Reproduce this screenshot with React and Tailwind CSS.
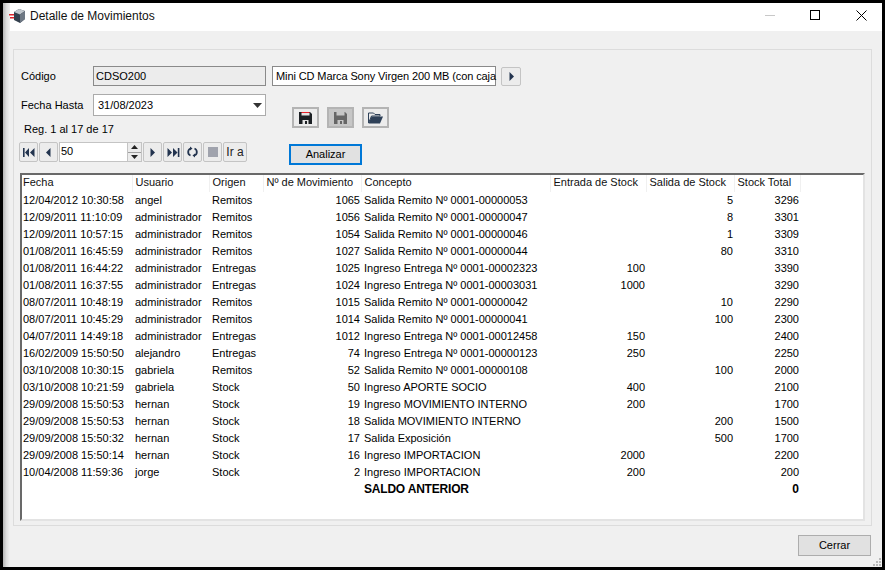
import React from "react";

const rows = [
  ["12/04/2012 10:30:58","angel","Remitos","1065","Salida Remito Nº 0001-00000053","","5","3296"],
  ["12/09/2011 11:10:09","administrador","Remitos","1056","Salida Remito Nº 0001-00000047","","8","3301"],
  ["12/09/2011 10:57:15","administrador","Remitos","1054","Salida Remito Nº 0001-00000046","","1","3309"],
  ["01/08/2011 16:45:59","administrador","Remitos","1027","Salida Remito Nº 0001-00000044","","80","3310"],
  ["01/08/2011 16:44:22","administrador","Entregas","1025","Ingreso Entrega Nº 0001-00002323","100","","3390"],
  ["01/08/2011 16:37:55","administrador","Entregas","1024","Ingreso Entrega Nº 0001-00003031","1000","","3290"],
  ["08/07/2011 10:48:19","administrador","Remitos","1015","Salida Remito Nº 0001-00000042","","10","2290"],
  ["08/07/2011 10:45:29","administrador","Remitos","1014","Salida Remito Nº 0001-00000041","","100","2300"],
  ["04/07/2011 14:49:18","administrador","Entregas","1012","Ingreso Entrega Nº 0001-00012458","150","","2400"],
  ["16/02/2009 15:50:50","alejandro","Entregas","74","Ingreso Entrega Nº 0001-00000123","250","","2250"],
  ["03/10/2008 10:30:15","gabriela","Remitos","52","Salida Remito Nº 0001-00000108","","100","2000"],
  ["03/10/2008 10:21:59","gabriela","Stock","50","Ingreso APORTE SOCIO","400","","2100"],
  ["29/09/2008 15:50:53","hernan","Stock","19","Ingreso MOVIMIENTO INTERNO","200","","1700"],
  ["29/09/2008 15:50:53","hernan","Stock","18","Salida MOVIMIENTO INTERNO","","200","1500"],
  ["29/09/2008 15:50:32","hernan","Stock","17","Salida Exposición","","500","1700"],
  ["29/09/2008 15:50:14","hernan","Stock","16","Ingreso IMPORTACION","2000","","2200"],
  ["10/04/2008 11:59:36","jorge","Stock","2","Ingreso IMPORTACION","200","","200"],
];

const headers = ["Fecha","Usuario","Origen","Nº de Movimiento","Concepto","Entrada de Stock","Salida de Stock","Stock Total"];
const widths = [110,77,54,98,189,96,88,66];
const rightAligned = [false,false,false,true,false,true,true,true];

function NavBtn({ children, w = "w-[19px]" }) {
  return (
    <button className={`${w} h-[20px] flex items-center justify-center bg-[#ececec] border border-[#c4c4c4] rounded-[2px] p-0`}>
      {children}
    </button>
  );
}

const navColor = "#23344f";

function Tri({ dir }) {
  return (
    <svg width="11" height="11" viewBox="0 0 11 11">
      {dir === "left" ? <path d="M7.5 1v9L3 5.500z" fill={navColor} /> : <path d="M3.5 1v9L8 5.500z" fill={navColor} />}
    </svg>
  );
}

function Save({ color = "#1c2024", red = "#e8202a", light = "#e4e4e4" }) {
  return (
    <svg width="13" height="12" viewBox="0 0 13 12">
      <path d="M0 0h11l2 2v10H0z" fill={color} />
      <rect x="2.500" y="0" width="8" height="1" fill={red} />
      <rect x="2.500" y="1" width="8" height="2.500" fill={light} />
      <rect x="3.500" y="8" width="6" height="4" fill={light} />
      <rect x="6" y="9" width="2" height="3" fill={color} />
    </svg>
  );
}

function IconBtn({ children, bg = "bg-[#ececec]" }) {
  return (
    <button className={`w-[27px] h-[21px] flex items-center justify-center ${bg} border-2 border-[#b4b4b4] p-0`}>
      {children}
    </button>
  );
}

export default function App() {
  return (
    <div className="relative w-[885px] h-[570px] bg-black pt-[3px] pr-[3px] pb-[3px] pl-[3px] flex text-black text-[11px] leading-[17px] overflow-hidden" style={{ fontFamily: '"Liberation Sans", Arial, sans-serif' }}>
      <div className="w-[7px] shrink-0 bg-gradient-to-r from-[#b4b4b4] via-[#dcdcdc] to-[#f0f0f0]" />
      <div className="flex-1 flex flex-col min-w-0 bg-[#f0f0f0]">
        {/* title bar */}
        <div className="h-[28px] bg-white flex items-center relative shrink-0 pb-[2px]">
          <svg className="absolute left-[-1px] top-[5px]" width="17" height="16" viewBox="0 0 17 16">
            <rect x="0" y="6" width="6" height="1.5" fill="#e0242c" />
            <rect x="1" y="9" width="5" height="1.5" fill="#e0242c" />
            <path d="M5 4l5-3 6 2v8l-5 4-6-3z" fill="#34404e" />
            <path d="M5 4l6 2.500 5-3.500-6-2z" fill="#c2c8ce" />
            <path d="M11 6.500V15l5-4V3z" fill="#6e7884" />
          </svg>
          <span className="ml-[20px] text-[#111] text-[12px]">Detalle de Movimientos</span>
          <div className="ml-auto relative w-[120px] h-[28px] self-start">
            <span className="absolute left-[3px] top-[12px] w-[10px] h-px bg-[#c8c8c8]" />
            <span className="absolute left-[48px] top-[7px] w-[10px] h-[10px] border border-black" />
            <svg className="absolute left-[94px] top-[7px]" width="11" height="11" viewBox="0 0 11 11">
              <path d="M0.500 0.500l10 10M10.500 0.500l-10 10" stroke="#000" strokeWidth="1" fill="none" />
            </svg>
          </div>
        </div>

        {/* body */}
        <div className="flex-1 flex flex-col pt-[18px] pl-[3px] pr-[10px] min-h-0">
          <div className="h-[477px] border border-[#dcdcdc] pt-[16px] px-[6px] pb-[4px] flex flex-col shrink-0">
            {/* row 1 */}
            <div className="flex items-start h-[20px]">
              <label className="w-[73px] pl-[1px] leading-[20px]">Código</label>
              <div className="w-[173px] h-[20px] border border-[#8a8a8a] bg-[#ececec] pl-[2px] leading-[18px]">CDSO200</div>
              <div className="ml-[6px] w-[224px] h-[20px] border border-[#8a8a8a] bg-white pl-[3px] leading-[18px] whitespace-nowrap tracking-[-0.1px]">Mini CD Marca Sony Virgen 200 MB (con caja</div>
              <button className="ml-[5px] mt-[1px] w-[20px] h-[19px] flex items-center justify-center bg-[#ececec] border border-[#c4c4c4] rounded-[2px] p-0">
                <Tri dir="right" />
              </button>
            </div>

            <div className="flex mt-[8px] h-[71px]">
              {/* left col */}
              <div className="w-[269px] flex flex-col shrink-0">
                <div className="flex items-start h-[22px]">
                  <label className="w-[73px] pl-[1px] leading-[22px]">Fecha Hasta</label>
                  <div className="w-[173px] h-[22px] border border-[#ababab] bg-white pl-[4px] leading-[20px] flex items-center justify-between">
                    <span>31/08/2023</span>
                    <svg className="mr-[3px]" width="9" height="5" viewBox="0 0 9 5"><path d="M0 0h9L4.500 5z" fill="#333" /></svg>
                  </div>
                </div>
                <div className="pl-[4px] mt-[6px] h-[14px] leading-[14px]">Reg. 1 al 17 de 17</div>
                <div className="flex items-center gap-px mt-[6px] -ml-[1px] h-[20px]">
                  <NavBtn>
                    <svg width="14" height="11" viewBox="0 0 14 11"><path d="M1 1h1.600v9H1zM7 1v9L3 5.500zM12.500 1v9L8 5.500z" fill={navColor} /></svg>
                  </NavBtn>
                  <NavBtn><Tri dir="left" /></NavBtn>
                  <div className="w-[83px] h-[20px] bg-white border border-[#c4c4c4] flex justify-between">
                    <span className="pl-[1px] leading-[16px]">50</span>
                    <div className="w-[14px] flex flex-col border-l border-[#c4c4c4] bg-[#ececec]">
                      <div className="flex-1 flex items-center justify-center border-b border-[#a0a0a0]"><svg width="7" height="4" viewBox="0 0 7 4"><path d="M3.500 0L7 4H0z" fill="#222" /></svg></div>
                      <div className="flex-1 flex items-center justify-center"><svg width="7" height="4" viewBox="0 0 7 4"><path d="M0 0h7L3.500 4z" fill="#222" /></svg></div>
                    </div>
                  </div>
                  <NavBtn><Tri dir="right" /></NavBtn>
                  <NavBtn>
                    <svg width="14" height="11" viewBox="0 0 14 11"><path d="M1.500 1v9L6 5.500zM7 1v9l4.500-4.500zM11.800 1h1.600v9h-1.600z" fill={navColor} /></svg>
                  </NavBtn>
                  <NavBtn>
                    <svg width="13" height="12" viewBox="0 0 13 12">
                      <path d="M4.500 2.500A3.800 3.800 0 0 0 4.500 9.500" stroke={navColor} strokeWidth="1.800" fill="none" />
                      <path d="M8.500 2.500A3.800 3.800 0 0 1 8.500 9.500" stroke={navColor} strokeWidth="1.800" fill="none" />
                      <path d="M4 0.500v4l2.500-2zM9 11.500v-4l-2.500 2z" fill={navColor} />
                    </svg>
                  </NavBtn>
                  <NavBtn>
                    <span className="w-[10px] h-[10px] bg-[#a0a3ad] block" />
                  </NavBtn>
                  <NavBtn w="w-[24px]"><span className="leading-none text-[#222] text-[12px]">Ir a</span></NavBtn>
                </div>
              </div>

              {/* right col */}
              <div className="flex flex-col">
                <div className="flex gap-[8px] ml-[3px] mt-[13px]">
                  <IconBtn><Save /></IconBtn>
                  <IconBtn bg="bg-[#c6c6c6]"><Save color="#666" red="#c6c6c6" light="#c6c6c6" /></IconBtn>
                  <IconBtn>
                    <svg width="15" height="12" viewBox="0 0 15 12">
                      <path d="M0.500 11V1h5l1.500 1.500h5V4H3.500z" fill="none" stroke="#2e4058" strokeWidth="1" />
                      <path d="M0.500 11.500L3.500 4.500H15L12 11.500z" fill="#2e4058" />
                    </svg>
                  </IconBtn>
                </div>
                <button className="mt-[16px] w-[73px] h-[21px] bg-[#e1e1e1] border-2 border-[#0078d7] leading-[15px] p-0">Analizar</button>
              </div>
            </div>

            {/* grid */}
            <div className="mt-[8px] flex-1 min-h-0 bg-white border-t-2 border-l-2 border-r-2 border-b-2 border-t-[#696969] border-l-[#696969] border-r-[#e3e3e3] border-b-[#e3e3e3] overflow-hidden">
              <table className="table-fixed border-collapse w-[778px]">
                <colgroup>
                  {widths.map((w, i) => <col key={i} style={{ width: w }} />)}
                </colgroup>
                <thead>
                  <tr className="h-[17px]">
                    {headers.map((h, i) => (
                      <th key={i} className="font-normal text-left pl-[1px] pr-0 pt-0 pb-[2px] leading-[15px] border-r border-[#f0f0f0] whitespace-nowrap overflow-hidden text-[#111]">
                        <span className={i === 0 ? "" : "pl-[2px]"}>{h}</span>
                      </th>
                    ))}
                  </tr>
                </thead>
                <tbody>
                  {rows.map((r, ri) => (
                    <tr key={ri} className="h-[17px]">
                      {r.map((c, i) => (
                        <td key={i} className={`p-0 whitespace-nowrap overflow-hidden ${rightAligned[i] ? "text-right pr-[1px]" : i === 0 ? "pl-[1px]" : "pl-[3px]"}`}>{c}</td>
                      ))}
                    </tr>
                  ))}
                  <tr className="h-[17px] font-bold text-[12px]">
                    <td colSpan={4} className="p-0" />
                    <td className="p-0 pl-[3px] tracking-[-0.2px]">SALDO ANTERIOR</td>
                    <td colSpan={2} className="p-0" />
                    <td className="p-0 pr-[1px] text-right">0</td>
                  </tr>
                </tbody>
              </table>
            </div>
          </div>

          {/* footer */}
          <div className="flex justify-end pt-[9px] pr-[1px]">
            <button className="w-[73px] h-[21px] bg-[#e1e1e1] border border-[#adadad] p-0 leading-[19px]">Cerrar</button>
          </div>
        </div>
      </div>
      {/* size grip */}
      <svg className="absolute right-[3px] bottom-[4px]" width="9" height="8" viewBox="0 0 9 8">
        <path d="M6 0h2v2H6zM3 3h2v2H3zM6 3h2v2H6zM0 6h2v2H0zM3 6h2v2H3zM6 6h2v2H6z" fill="#b8b8b8" />
      </svg>
    </div>
  );
}
